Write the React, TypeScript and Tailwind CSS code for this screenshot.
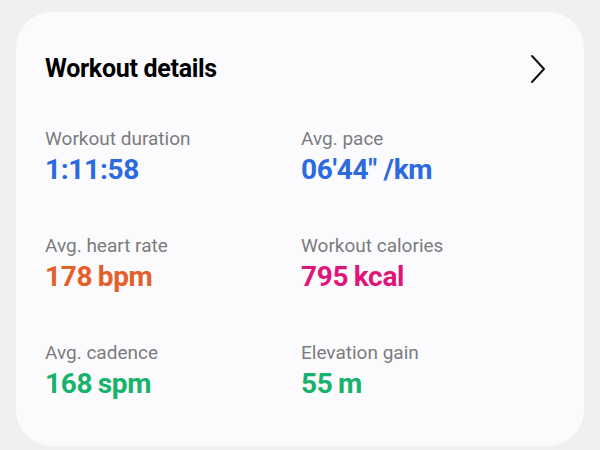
import React from "react";

const items = [
  { label: "Workout duration", value: "1:11:58", color: "text-[#2b6ae0]" },
  { label: "Avg. pace", value: "06'44\" /km", color: "text-[#2b6ae0]" },
  { label: "Avg. heart rate", value: "178\u2009bpm", color: "text-[#e4602a]" },
  { label: "Workout calories", value: "795\u2009kcal", color: "text-[#e0157a]" },
  { label: "Avg. cadence", value: "168\u2009spm", color: "text-[#17b26b]" },
  { label: "Elevation gain", value: "55\u2009m", color: "text-[#17b26b]" },
];

export default function App() {
  return (
    <div
      className="w-[600px] h-[450px] bg-[#f0f0f2] pt-3 px-4 overflow-hidden"
      style={{ fontFamily: "Roboto, 'Noto Sans', sans-serif" }}
    >
      <div className="h-[434px] bg-[#fbfbfd] rounded-[36px] pl-[29px] pr-[36px] pt-[42px]">
        <div className="flex items-center justify-between h-[30px]">
          <div className="text-[25px] leading-[30px] font-bold text-black tracking-[-0.3px]">Workout details</div>
          <svg width="16" height="30" viewBox="0 0 16 30" className="mr-[2px]">
            <path d="M2 2 L14 15 L2 28" fill="none" stroke="#111" strokeWidth="2" strokeLinecap="round" strokeLinejoin="round" />
          </svg>
        </div>
        <div className="grid grid-cols-[256px_1fr] mt-[43px] gap-y-[48px]">
          {items.map((it) => (
            <div key={it.label} className="flex flex-col">
              <div className="text-[19px] leading-[24px] text-[#7b7b7d]">{it.label}</div>
              <div className={`text-[28px] leading-[32px] mt-[3px] font-bold tracking-[-0.3px] ${it.color}`}>{it.value}</div>
            </div>
          ))}
        </div>
      </div>
    </div>
  );
}
